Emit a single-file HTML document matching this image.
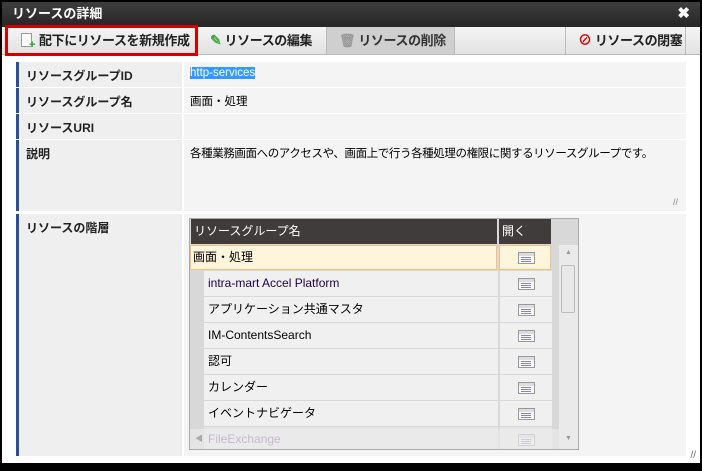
<!DOCTYPE html>
<html><head><meta charset="utf-8"><style>
*{box-sizing:border-box;margin:0;padding:0}
body{width:702px;height:471px;background:#000;font-family:"Liberation Sans","Noto Sans CJK JP",sans-serif;font-size:12px;color:#000;position:relative;overflow:hidden}
.win{position:absolute;left:2px;top:2px;width:698px;height:461px;background:#fff}
.title{position:absolute;left:0;top:0;width:698px;height:25px;background:linear-gradient(#3e3e3e,#262626);color:#fff;font-weight:bold;font-size:13px;line-height:24px;padding-left:10px}
.x{position:absolute;right:10px;top:0;color:#fff;font-size:15px;font-weight:bold}
.tb{position:absolute;left:0;top:25px;width:698px;height:28px;background:linear-gradient(#f4f4f4,#e2e2e2);border-bottom:1px solid #bbb}
.btn{position:absolute;top:0;height:27px;line-height:27px;font-weight:bold;font-size:13px;color:#222;border-right:1px solid #bbb;white-space:nowrap;letter-spacing:-0.4px}
.row{position:absolute;left:14px;width:670px}
.lab{position:absolute;left:0;top:0;bottom:0;width:166px;background:#efefef;border-left:3px solid #2d4e93;font-weight:bold;padding-left:7px;padding-top:5px;color:#222}
.val{position:absolute;left:168px;top:0;bottom:0;right:0;background:#f4f4f4;padding-left:6px;padding-top:5px;white-space:nowrap;font-size:11.5px}
.tree{position:absolute;left:187px;top:216px;width:390px;height:232px;border:1px solid #aaa;background:#d8d8d8;overflow:hidden}
.hd{position:absolute;top:0;height:25px;background:#403c3c;color:#fff;line-height:25px;font-size:12px;padding-left:3px}
.tr{position:absolute;left:0;width:368px;height:26px}
.c1{position:absolute;top:0;height:25px;left:14px;width:294px;background:#f0f0f0;line-height:25px;padding-left:4px}
.c2{position:absolute;top:0;height:25px;left:310px;width:52px;background:#f0f0f0}
.ic{position:absolute;left:18px;top:7px;width:17px;height:12px;border:1px solid #999;background:linear-gradient(#ddd 0 3px,#fafafa 3px)}
.ic:after{content:"";position:absolute;left:2px;top:4px;width:10px;height:5px;background:repeating-linear-gradient(#88a 0 1px,transparent 1px 2px)}
</style></head><body>
<div class="win">
<div class="title">リソースの詳細<span class="x">✖</span></div>
<div class="tb">
<div class="btn" style="left:3px;width:193px;border:3px solid #d40000;top:-2px;height:31px;line-height:25px;padding-left:13px;background:linear-gradient(#f4f4f4,#e2e2e2)"><span style="display:inline-block;width:11px;height:14px;border:1px solid #999;background:#fff;vertical-align:-2px;margin-right:7px;position:relative"><span style="position:absolute;right:-4px;bottom:-3px;color:#2a2;font-size:11px;line-height:8px">+</span></span>配下にリソースを新規作成</div>
<div class="btn" style="left:196px;width:129px;padding-left:12px"><span style="color:#4a4;font-size:14px">✎</span> リソースの編集</div>
<div class="btn" style="left:325px;width:128px;background:#cfcfcf;padding-left:12px;color:#333"><span style="color:#999">🗑</span> リソースの削除</div>
<div class="btn" style="left:563px;width:121px;border-left:1px solid #bbb;padding-left:12px"><span style="color:#d00;font-size:14px">⊘</span> リソースの閉塞</div>
</div>
<div class="row" style="top:60px;height:25px"><div class="lab">リソースグループID</div><div class="val"><span style="background:#3399ff;color:#fff">http-services</span></div></div>
<div class="row" style="top:86px;height:25px"><div class="lab">リソースグループ名</div><div class="val">画面・処理</div></div>
<div class="row" style="top:112px;height:25px"><div class="lab">リソースURI</div><div class="val"></div></div>
<div class="row" style="top:138px;height:71px"><div class="lab">説明</div><div class="val"><span style="letter-spacing:-0.4px">各種業務画面へのアクセスや、画面上で行う各種処理の権限に関するリソースグループです。</span><span style="position:absolute;right:8px;bottom:4px;color:#888;font-size:9px">//</span></div></div>
<div class="row" style="top:212px;height:242px"><div class="lab">リソースの階層</div><div class="val"></div></div>
<div class="tree">
<div class="hd" style="left:1px;width:306px">リソースグループ名</div>
<div class="hd" style="left:309px;width:52px">開く</div>
<div class="tr" style="top:26px"><div class="c1" style="left:0;width:307px;background:#fff5dc;border:1px solid #f6c07f;line-height:23px;padding-left:2px">画面・処理</div><div class="c2" style="left:309px;background:#fff5dc;border:1px solid #f6c07f"><div class="ic" style="top:6px"></div></div></div>
<div class="tr" style="top:52px"><div class="c1" style="color:#220044">intra-mart Accel Platform</div><div class="c2"><div class="ic"></div></div></div>
<div class="tr" style="top:78px"><div class="c1">アプリケーション共通マスタ</div><div class="c2"><div class="ic"></div></div></div>
<div class="tr" style="top:104px"><div class="c1">IM-ContentsSearch</div><div class="c2"><div class="ic"></div></div></div>
<div class="tr" style="top:130px"><div class="c1">認可</div><div class="c2"><div class="ic"></div></div></div>
<div class="tr" style="top:156px"><div class="c1">カレンダー</div><div class="c2"><div class="ic"></div></div></div>
<div class="tr" style="top:182px"><div class="c1">イベントナビゲータ</div><div class="c2"><div class="ic"></div></div></div>
<div class="tr" style="top:208px;opacity:.55"><div class="c1" style="color:#639">FileExchange</div><div class="c2"><div class="ic"></div></div></div>
<div style="position:absolute;left:0;top:210px;width:390px;height:22px;background:rgba(240,240,240,.5)"><span style="position:absolute;left:5px;top:4px;color:#aaa;font-size:8px">◀</span></div>
<div style="position:absolute;left:369px;top:26px;width:19px;height:206px;background:#eaeaea"><span style="position:absolute;left:6px;top:4px;color:#999;font-size:7px">▲</span><div style="position:absolute;left:2px;top:20px;width:14px;height:48px;background:#e8e8e8;border:1px solid #bbb;border-radius:2px"></div><span style="position:absolute;left:6px;top:190px;color:#999;font-size:7px">▼</span></div>
</div>
<span style="position:absolute;right:4px;bottom:2px;color:#666;font-size:10px">//</span>
</div>
</body></html>
